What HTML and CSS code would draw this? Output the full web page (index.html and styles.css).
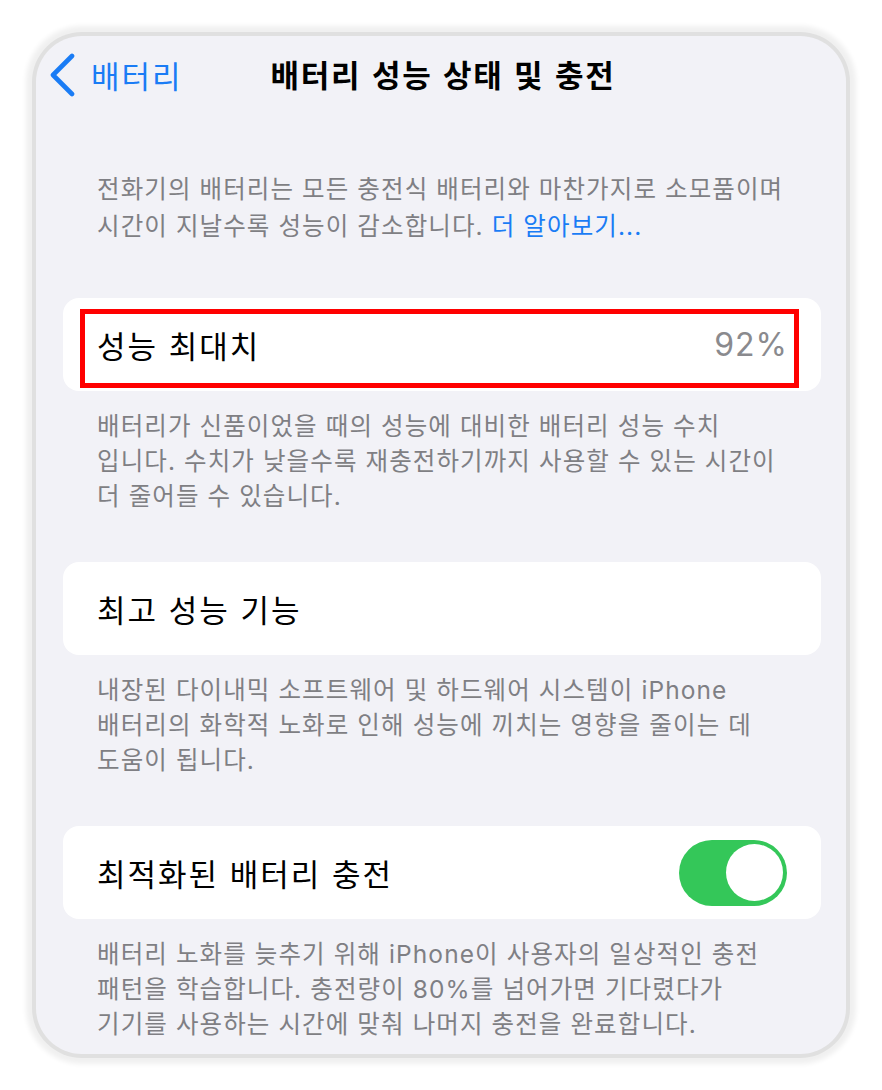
FILE: index.html
```html
<!DOCTYPE html>
<html lang="ko">
<head>
<meta charset="utf-8">
<link rel="stylesheet" href="styles.css">
</head>
<body>
<div class="screen">
  <div class="nav">
    <div class="back">
      <svg class="chev" width="28" height="44" viewBox="0 0 28 44"><path d="M23 3 L4 22 L23 41" fill="none" stroke="#1a7cf5" stroke-width="4.6" stroke-linecap="round" stroke-linejoin="round"/></svg>
      <span class="back-text">배터리</span>
    </div>
    <div class="title">배터리 성능 상태 및 충전</div>
  </div>

  <p class="note first">전화기의 배터리는 모든 충전식 배터리와 마찬가지로 소모품이며<br>시간이 지날수록 성능이 감소합니다. <span class="link">더 알아보기...</span></p>

  <div class="card highlighted">
    <span class="label">성능 최대치</span>
    <span class="value">92%</span>
    <div class="mark"></div>
  </div>
  <p class="note">배터리가 신품이었을 때의 성능에 대비한 배터리 성능 수치<br>입니다. 수치가 낮을수록 재충전하기까지 사용할 수 있는 시간이<br>더 줄어들 수 있습니다.</p>

  <div class="card">
    <span class="label">최고 성능 기능</span>
  </div>
  <p class="note">내장된 다이내믹 소프트웨어 및 하드웨어 시스템이 iPhone<br>배터리의 화학적 노화로 인해 성능에 끼치는 영향을 줄이는 데<br>도움이 됩니다.</p>

  <div class="card">
    <span class="label">최적화된 배터리 충전</span>
    <div class="toggle"><div class="knob"></div></div>
  </div>
  <p class="note">배터리 노화를 늦추기 위해 iPhone이 사용자의 일상적인 충전<br>패턴을 학습합니다. 충전량이 80%를 넘어가면 기다렸다가<br>기기를 사용하는 시간에 맞춰 나머지 충전을 완료합니다.</p>
</div>
</body>
</html>
```

FILE: styles.css
```css
html, body {
  margin: 0;
  padding: 0;
  background: #ffffff;
}
body {
  width: 882px;
  height: 1090px;
  overflow: hidden;
  font-family: "Inter", "Noto Sans CJK KR", sans-serif;
}
.screen {
  margin: 36px 0 0 36px;
  width: 810px;
  height: 1018px;
  box-sizing: border-box;
  background: #f2f2f7;
  border-radius: 46px;
  box-shadow: 0 0 0 4px #e0e0e0, 0 0 5px 10px #f0f0f0;
  display: flex;
  flex-direction: column;
  padding: 0 25px 0 27px;
  overflow: hidden;
}
.nav {
  height: 74px;
  display: flex;
  align-items: center;
  justify-content: center;
  position: relative;
}
.back {
  position: absolute;
  left: -14px;
  top: 17px;
  display: flex;
  align-items: center;
  gap: 14px;
}
.back-text {
  font-family: "Noto Sans CJK KR", sans-serif;
  color: #1a7cf5;
  font-size: 31px;
  line-height: 40px;
  letter-spacing: 2px;
}
.title {
  font-family: "Noto Sans CJK KR", sans-serif;
  font-weight: 700;
  font-size: 31px;
  color: #000;
  letter-spacing: 1.8px;
  margin-left: 2px;
}
.note {
  margin: 18px 0 0 0;
  padding: 0 20px 0 34px;
  font-size: 24.5px;
  line-height: 35px;
  letter-spacing: 1.1px;
  color: #7f7f84;
}
.note.first {
  margin-top: 61px;
  line-height: 37px;
}
.link {
  color: #1a7cf5;
}
.card {
  position: relative;
  margin-top: 48px;
  height: 93px;
  background: #ffffff;
  border-radius: 16px;
  display: flex;
  align-items: center;
  justify-content: space-between;
  padding: 0 34px;
  flex-shrink: 0;
}
.note.first + .card {
  margin-top: 53px;
}
.label {
  font-size: 31px;
  color: #000;
  letter-spacing: 2px;
}
.value {
  font-size: 32px;
  color: #8a8a8e;
  letter-spacing: 1px;
  margin-right: -1px;
}
.mark {
  position: absolute;
  left: 17px;
  right: 22px;
  top: 11px;
  bottom: 3px;
  border: 5px solid #ff0000;
}
.toggle {
  width: 108px;
  height: 66px;
  border-radius: 33px;
  background: #34c759;
  display: flex;
  align-items: center;
  justify-content: flex-end;
  padding-right: 4px;
  box-sizing: border-box;
}
.knob {
  width: 57px;
  height: 57px;
  border-radius: 50%;
  background: #fff;
}
```
